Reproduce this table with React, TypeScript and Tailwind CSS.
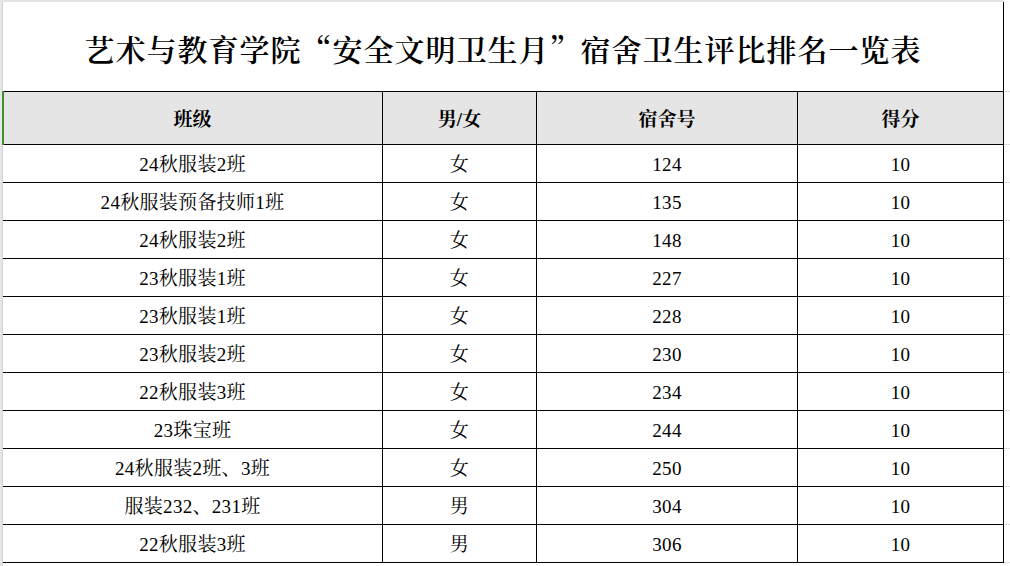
const rows: [string, string, string, string][] = [
  ["24秋服装2班", "女", "124", "10"],
  ["24秋服装预备技师1班", "女", "135", "10"],
  ["24秋服装2班", "女", "148", "10"],
  ["23秋服装1班", "女", "227", "10"],
  ["23秋服装1班", "女", "228", "10"],
  ["23秋服装2班", "女", "230", "10"],
  ["22秋服装3班", "女", "234", "10"],
  ["23珠宝班", "女", "244", "10"],
  ["24秋服装2班、3班", "女", "250", "10"],
  ["服装232、231班", "男", "304", "10"],
  ["22秋服装3班", "男", "306", "10"],
];

const widths = ["w-[380px]", "w-[154px]", "w-[261px]", "w-[206px]"];

export default function App() {
  return (
    <div
      className="relative w-[1010px] h-[566px] bg-white overflow-hidden text-black"
      style={{ fontFamily: '"Liberation Serif", "Noto Serif CJK SC", "Noto Sans CJK SC", serif' }}
    >
      {/* sheet gridline on top */}
      <div className="h-[2px] w-[1004px] bg-[#e3e3e3]" />
      <div className="flex">
        {/* row header strip */}
        <div className="w-[3px] h-[564px] bg-[#e6e6e6] border-r border-[#d4d4d4]" />
        <div className="flex flex-col">
          {/* title */}
          <div className="flex h-[89px]">
            <div className="w-[1001px] border-r border-black flex items-center justify-center pt-[3px]">
              <h1
                className="text-[30px] font-semibold tracking-[1px] leading-none"
                style={{ fontFamily: '"Noto Serif CJK SC", "Noto Sans CJK SC", sans-serif' }}
              >
                艺术与教育学院“安全文明卫生月”宿舍卫生评比排名一览表
              </h1>
            </div>
            <div className="w-[6px]" />
          </div>

          {/* header */}
          <div className="flex h-[54px]">
            <div className="flex bg-[#e5e5e5] border-t border-b border-black">
              {["班级", "男/女", "宿舍号", "得分"].map((h, i) => (
                <div
                  key={h}
                  className={`${widths[i]} border-r border-black flex items-center justify-center pt-[4px] text-[19px] font-bold`}
                >
                  {h}
                </div>
              ))}
            </div>
            <div className="w-[6px] border-t border-b border-[#dedede]" />
          </div>

          {/* data */}
          {rows.map((r, ri) => (
            <div key={ri} className="flex h-[38px]">
              <div className="flex border-b border-black">
                {r.map((c, i) => (
                  <div
                    key={i}
                    className={`${widths[i]} border-r border-black flex items-center justify-center pt-[4px] text-[19px] tracking-[0.3px]`}
                  >
                    {c}
                  </div>
                ))}
              </div>
              <div className="w-[6px] border-b border-[#dedede]" />
            </div>
          ))}
        </div>
      </div>

      {/* selected row marker */}
      <div className="absolute left-[2px] top-[91px] w-[2px] h-[54px] bg-[#3f8f2a]" />
    </div>
  );
}
